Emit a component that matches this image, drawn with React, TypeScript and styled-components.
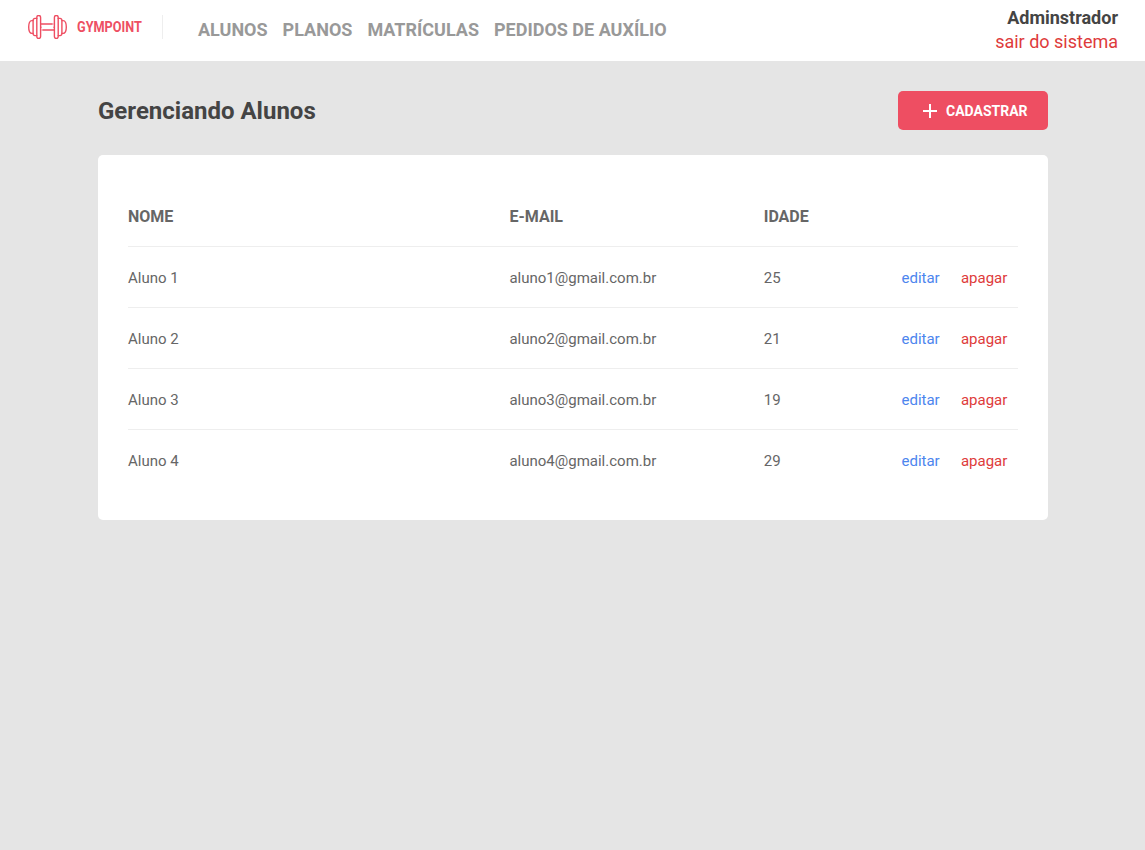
import React from 'react';
import styled, { createGlobalStyle } from 'styled-components';

const GlobalStyle = createGlobalStyle`
  * { margin: 0; padding: 0; box-sizing: border-box; }
  body { background: #e5e5e5; }
  body, button { font-family: Roboto, sans-serif; font-size: 16px; }
  a { text-decoration: none; }
`;

const Header = styled.header`
  display: flex;
  align-items: flex-start;
  justify-content: space-between;
  height: 61px;
  padding: 0 27px 0 28px;
  background: #fff;
`;

const Left = styled.div`
  display: flex;
  align-items: flex-start;
`;

const Brand = styled.div`
  display: flex;
  align-items: center;
  width: 135px;
  height: 24px;
  margin-top: 15px;
  border-right: 1px solid #eee;
`;

const BrandName = styled.strong`
  margin-left: 10px;
  color: #ee4e62;
  font-size: 14px;
  line-height: 24px;
  white-space: nowrap;
  transform: scaleX(0.905);
  transform-origin: left center;
`;

const Nav = styled.nav`
  display: flex;
  gap: 15px;
  margin: 18px 0 0 35px;
`;

const NavLink = styled.a`
  color: #999;
  font-size: 18px;
  font-weight: bold;
  line-height: 24px;
`;

const Profile = styled.div`
  display: flex;
  flex-direction: column;
  align-items: flex-end;
  padding-top: 6px;
  font-size: 18px;
  line-height: 24px;
`;

const UserName = styled.strong`
  color: #444;
`;

const SignOut = styled.a`
  color: #de3b3b;
`;

const Main = styled.main`
  width: 950px;
  margin: 30px auto 0 98px;
`;

const TitleBar = styled.div`
  display: flex;
  align-items: center;
  justify-content: space-between;
  height: 39px;
  margin-bottom: 25px;
`;

const Title = styled.h1`
  color: #444;
  font-size: 24px;
  line-height: 28px;
`;

const AddButton = styled.button`
  display: flex;
  align-items: center;
  width: 150px;
  height: 39px;
  padding-left: 25px;
  border: 0;
  border-radius: 5px;
  background: #ee4e62;
  color: #fff;
  font-size: 14px;
  font-weight: bold;

  svg { margin-right: 9px; }
`;

const Card = styled.section`
  height: 365px;
  padding: 31px 30px 0;
  border-radius: 5px;
  background: #fff;
`;

const Row = styled.div`
  display: grid;
  grid-template-columns: 3fr 2fr 1fr 1fr;
  align-items: center;
  height: 61px;
  padding-top: 2px;
  border-bottom: 1px solid #eee;
  color: #666;
  font-size: 15px;

  &:last-child { border-bottom-color: transparent; }
`;

const HeadRow = styled(Row)`
  padding-top: 0;
  font-size: 16px;
  font-weight: bold;
`;

const Actions = styled.div`
  display: flex;
  justify-content: space-around;
`;

const Action = styled.a<{ $danger?: boolean }>`
  color: ${({ $danger }) => ($danger ? '#de3b3b' : '#4d85ee')};
`;

const links = ['ALUNOS', 'PLANOS', 'MATRÍCULAS', 'PEDIDOS DE AUXÍLIO'];

const students = [
  { name: 'Aluno 1', email: 'aluno1@gmail.com.br', age: 25 },
  { name: 'Aluno 2', email: 'aluno2@gmail.com.br', age: 21 },
  { name: 'Aluno 3', email: 'aluno3@gmail.com.br', age: 19 },
  { name: 'Aluno 4', email: 'aluno4@gmail.com.br', age: 29 },
];

const Plates = () => (
  <>
    <path d="M8.8 2.4a1.8 1.8 0 0 1 3.8 0v19.2a1.8 1.8 0 0 1-3.8 0z" />
    <path d="M8.8 3.4H6.9a1.8 1.8 0 0 0-1.8 1.8v13.6a1.8 1.8 0 0 0 1.8 1.8h1.9" />
    <path d="M5.1 5.6H3.9C1.7 5.6.7 8.6.7 12s1 6.4 3.2 6.4h1.2" />
  </>
);

const Dumbbell = () => (
  <svg width="39" height="24" viewBox="0 0 39 24" fill="none" stroke="#ee4e62" strokeWidth="1.4" strokeLinecap="round" strokeLinejoin="round">
    <Plates />
    <g transform="matrix(-1 0 0 1 39 0)">
      <Plates />
    </g>
    <path d="M12.6 9h11.6M14.8 15h11.6M12.9 12.1v.1M26.1 12.1v.1M12.6 15h.2M26.2 9h.2" />
  </svg>
);

const PlusIcon = () => (
  <svg width="14" height="14" viewBox="0 0 14 14" fill="#fff">
    <path d="M6 0h2v6h6v2H8v6H6V8H0V6h6z" />
  </svg>
);

export default function App() {
  return (
    <>
      <GlobalStyle />
      <Header>
        <Left>
          <Brand>
            <Dumbbell />
            <BrandName>GYMPOINT</BrandName>
          </Brand>
          <Nav>
            {links.map((link) => (
              <NavLink key={link} href="#">{link}</NavLink>
            ))}
          </Nav>
        </Left>
        <Profile>
          <UserName>Adminstrador</UserName>
          <SignOut href="#">sair do sistema</SignOut>
        </Profile>
      </Header>
      <Main>
        <TitleBar>
          <Title>Gerenciando Alunos</Title>
          <AddButton type="button">
            <PlusIcon />
            CADASTRAR
          </AddButton>
        </TitleBar>
        <Card>
          <HeadRow>
            <span>NOME</span>
            <span>E-MAIL</span>
            <span>IDADE</span>
          </HeadRow>
          {students.map((student) => (
            <Row key={student.name}>
              <span>{student.name}</span>
              <span>{student.email}</span>
              <span>{student.age}</span>
              <Actions>
                <Action href="#">editar</Action>
                <Action href="#" $danger>apagar</Action>
              </Actions>
            </Row>
          ))}
        </Card>
      </Main>
    </>
  );
}
